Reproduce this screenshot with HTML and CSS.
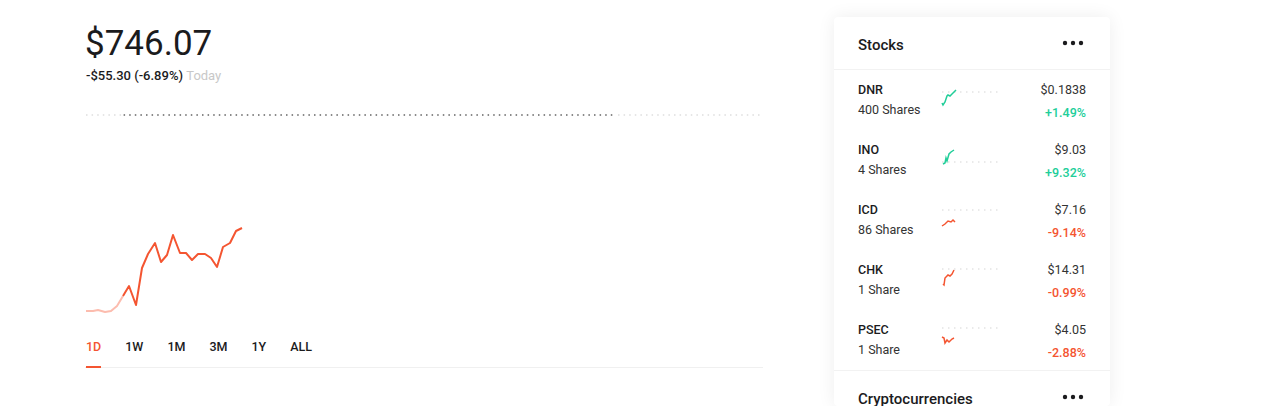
FILE: index.html
```html
<!DOCTYPE html>
<html lang="en">
<head>
  <meta charset="UTF-8" />
  <meta name="viewport" content="width=device-width, initial-scale=1" />
  <title>Portfolio</title>
  <link rel="stylesheet" href="styles.css">
</head>
<body>
  <div class="page">
    <main class="portfolio">
      <section class="balance">
        <h1 class="balance-value">$746.07</h1>
        <p class="balance-change">-$55.30 (-6.89%) <span class="today">Today</span></p>
      </section>

      <svg class="chart" width="678" height="220" viewBox="0 0 678 220">
        <line x1="1" y1="10" x2="38" y2="10" stroke="#e6e6e6" stroke-width="2" stroke-dasharray="1.5 4.1" />
        <line x1="38.6" y1="10" x2="530" y2="10" stroke="#8a8a8a" stroke-width="2" stroke-dasharray="1.5 4.1" />
        <line x1="533" y1="10" x2="678" y2="10" stroke="#e6e6e6" stroke-width="2" stroke-dasharray="1.5 4.1" />
        <polyline fill="none" stroke="#fcbcae" stroke-width="2" stroke-linejoin="round"
          points="1,206 8,206 13,205 20,207 26,206 32,201 38,191" />
        <polyline fill="none" stroke="#f45531" stroke-width="2" stroke-linejoin="round"
          points="38,191 44,181 51,200 57,163 63,149 70,138 76,157 82,150 88,130 95,148 101,148 107,155 113,149 120,149 126,153 132,162 138,142 145,138 151,126 157,123" />
      </svg>

      <nav class="ranges">
        <a class="range active" href="#">1D</a>
        <a class="range" href="#">1W</a>
        <a class="range" href="#">1M</a>
        <a class="range" href="#">3M</a>
        <a class="range" href="#">1Y</a>
        <a class="range" href="#">ALL</a>
      </nav>
    </main>

    <aside class="sidebar">
      <div class="card-header">
        <h2>Stocks</h2>
        <svg class="more" width="22" height="6" viewBox="0 0 22 6">
          <circle cx="3" cy="3" r="2.2" fill="#1b1b1d" />
          <circle cx="11" cy="3" r="2.2" fill="#1b1b1d" />
          <circle cx="19" cy="3" r="2.2" fill="#1b1b1d" />
        </svg>
      </div>

      <ul class="stock-list">
        <li class="stock">
          <div class="stock-name">
            <span class="symbol">DNR</span>
            <span class="shares">400 Shares</span>
          </div>
          <svg class="spark" width="58" height="40" viewBox="0 0 58 40">
            <line x1="1" y1="12" x2="58" y2="12" stroke="#e3e3e3" stroke-width="1.5" stroke-dasharray="1.5 4.5" />
            <polyline fill="none" stroke="#21ce99" stroke-width="1.5" points="1,23 2,25 4,22 6,16 7,15 9,16 11,14 13,12 15,10" />
          </svg>
          <div class="stock-price">
            <span class="price">$0.1838</span>
            <span class="pct up">+1.49%</span>
          </div>
        </li>
        <li class="stock">
          <div class="stock-name">
            <span class="symbol">INO</span>
            <span class="shares">4 Shares</span>
          </div>
          <svg class="spark" width="58" height="40" viewBox="0 0 58 40">
            <line x1="1" y1="22" x2="58" y2="22" stroke="#e3e3e3" stroke-width="1.5" stroke-dasharray="1.5 4.5" />
            <polyline fill="none" stroke="#21ce99" stroke-width="1.5" points="2,24 4,23 5,18 6,21 8,14 10,12 13,10" />
          </svg>
          <div class="stock-price">
            <span class="price">$9.03</span>
            <span class="pct up">+9.32%</span>
          </div>
        </li>
        <li class="stock">
          <div class="stock-name">
            <span class="symbol">ICD</span>
            <span class="shares">86 Shares</span>
          </div>
          <svg class="spark" width="58" height="40" viewBox="0 0 58 40">
            <line x1="1" y1="10" x2="58" y2="10" stroke="#e3e3e3" stroke-width="1.5" stroke-dasharray="1.5 4.5" />
            <polyline fill="none" stroke="#f45531" stroke-width="1.5" points="1,26 4,24 7,21 10,22 12,20 14,22" />
          </svg>
          <div class="stock-price">
            <span class="price">$7.16</span>
            <span class="pct down">-9.14%</span>
          </div>
        </li>
        <li class="stock">
          <div class="stock-name">
            <span class="symbol">CHK</span>
            <span class="shares">1 Share</span>
          </div>
          <svg class="spark" width="58" height="40" viewBox="0 0 58 40">
            <line x1="1" y1="9" x2="58" y2="9" stroke="#e3e3e3" stroke-width="1.5" stroke-dasharray="1.5 4.5" />
            <polyline fill="none" stroke="#f45531" stroke-width="1.5" points="2,24 3,25 4,18 7,15 9,16 11,14 13,10" />
          </svg>
          <div class="stock-price">
            <span class="price">$14.31</span>
            <span class="pct down">-0.99%</span>
          </div>
        </li>
        <li class="stock">
          <div class="stock-name">
            <span class="symbol">PSEC</span>
            <span class="shares">1 Share</span>
          </div>
          <svg class="spark" width="58" height="40" viewBox="0 0 58 40">
            <line x1="1" y1="8" x2="58" y2="8" stroke="#e3e3e3" stroke-width="1.5" stroke-dasharray="1.5 4.5" />
            <polyline fill="none" stroke="#f45531" stroke-width="1.5" points="1,17 3,18 4,23 6,20 8,22 11,19 13,18" />
          </svg>
          <div class="stock-price">
            <span class="price">$4.05</span>
            <span class="pct down">-2.88%</span>
          </div>
        </li>
      </ul>

      <div class="card-header">
        <h2>Cryptocurrencies</h2>
        <svg class="more" width="22" height="6" viewBox="0 0 22 6">
          <circle cx="3" cy="3" r="2.2" fill="#1b1b1d" />
          <circle cx="11" cy="3" r="2.2" fill="#1b1b1d" />
          <circle cx="19" cy="3" r="2.2" fill="#1b1b1d" />
        </svg>
      </div>
    </aside>
  </div>
</body>
</html>
```

FILE: styles.css
```css
body {
  font-family: Roboto, 'Noto Sans', sans-serif;
  margin: 0;
  background: #fff;
  color: #1b1b1d;
  overflow: hidden;
}
.page {
  display: flex;
  gap: 71px;
  padding-left: 85px;
  height: 406px;
}
.portfolio {
  width: 678px;
  padding-top: 24px;
}
.balance-value {
  margin: 0;
  font-size: 35px;
  font-weight: 400;
  line-height: 40px;
}
.balance-change {
  margin: 4px 0 0 1px;
  font-size: 13px;
  font-weight: 500;
  line-height: 16px;
}
.balance-change .today {
  color: #c8c8c8;
  font-weight: 400;
}
.chart {
  display: block;
  margin-top: 21px;
}
.ranges {
  display: flex;
  gap: 24px;
  margin-top: 6px;
  border-bottom: 1px solid #f0f0f0;
  padding-left: 1px;
}
.range {
  text-decoration: none;
  color: #1b1b1d;
  font-size: 12.5px;
  font-weight: 500;
  line-height: 16px;
  padding: 8px 0 11px;
  border-bottom: 2px solid transparent;
  margin-bottom: -1px;
}
.range.active {
  color: #f45531;
  border-bottom-color: #f45531;
}

/* sidebar card */
.sidebar {
  width: 276px;
  margin-top: 17px;
  background: #fff;
  border-radius: 4px;
  box-shadow: 0 0 18px rgba(0, 0, 0, 0.07);
  height: 389px;
  overflow: hidden;
}
.card-header {
  display: flex;
  justify-content: space-between;
  align-items: center;
  height: 52px;
  padding: 0 26px 0 24px;
  border-bottom: 1px solid #f2f2f2;
}
.card-header h2 {
  margin: 4px 0 0;
  font-size: 15px;
  font-weight: 500;
}
.stock-list {
  list-style: none;
  margin: 0;
  padding: 0;
  border-bottom: 1px solid #f2f2f2;
}
.stock {
  display: flex;
  align-items: center;
  height: 60px;
  padding: 0 24px;
  box-sizing: border-box;
  font-size: 12.5px;
  line-height: 16px;
}
.stock-name {
  width: 83px;
  display: flex;
  flex-direction: column;
  gap: 4px;
}
.symbol {
  font-weight: 500;
}
.shares {
  color: #333;
}
.spark {
  display: block;
}
.stock-price {
  flex: 1;
  display: flex;
  flex-direction: column;
  align-items: flex-end;
  gap: 7px;
  margin-top: 3px;
}
.price {
  color: #333;
}
.pct {
  font-weight: 500;
}
.pct.up {
  color: #21ce99;
}
.pct.down {
  color: #f45531;
}
```
